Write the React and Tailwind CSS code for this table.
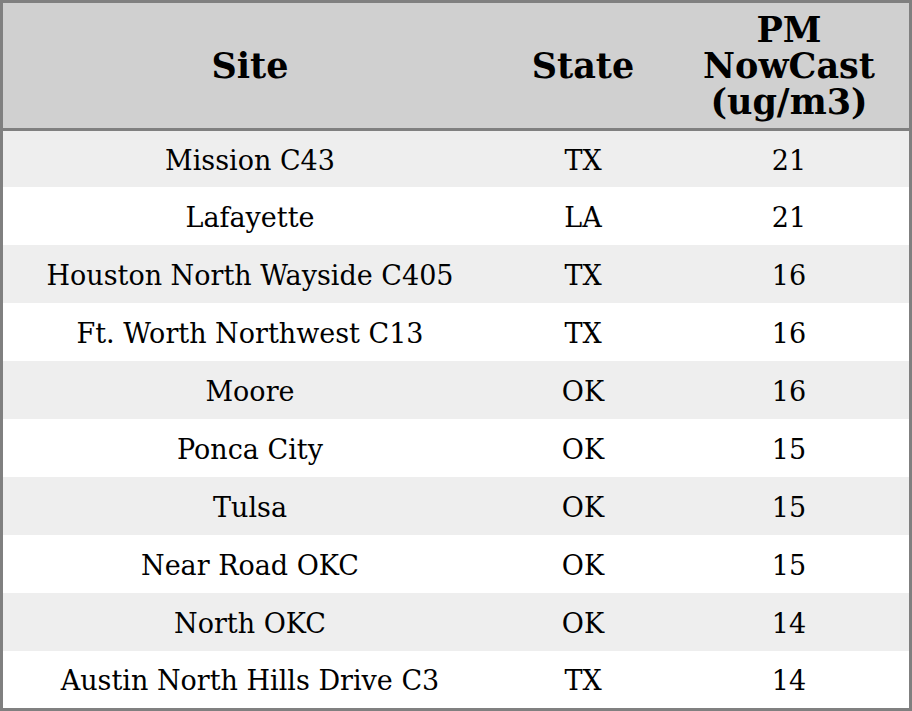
const rows = [
  ['Mission C43', 'TX', '21'],
  ['Lafayette', 'LA', '21'],
  ['Houston North Wayside C405', 'TX', '16'],
  ['Ft. Worth Northwest C13', 'TX', '16'],
  ['Moore', 'OK', '16'],
  ['Ponca City', 'OK', '15'],
  ['Tulsa', 'OK', '15'],
  ['Near Road OKC', 'OK', '15'],
  ['North OKC', 'OK', '14'],
  ['Austin North Hills Drive C3', 'TX', '14'],
]

function rowHeight(i) {
  if (i === 0) return 'h-[56px]'
  if (i === rows.length - 1) return 'h-[57px]'
  return 'h-[58px]'
}

export default function App() {
  return (
    <div className="w-[912px] h-[711px] border-[3px] border-[#808080] bg-white text-black font-['DejaVu_Serif',serif] flex flex-col overflow-hidden">
      {/* Header */}
      <div className="h-[125px] bg-[#d0d0d0] flex items-center font-bold text-[35px] leading-[36px] text-center">
        <div className="w-[494px]">Site</div>
        <div className="w-[172px]">State</div>
        <div className="flex-1">
          PM
          <br />
          NowCast
          <br />
          (ug/m3)
        </div>
      </div>
      <div className="h-[3px] bg-[#808080]" />

      {/* Rows */}
      {rows.map((r, i) => (
        <div
          key={r[0]}
          className={`${rowHeight(i)} ${i % 2 === 0 ? 'bg-[#eeeeee]' : 'bg-white'} flex items-center pt-[4px] text-[27px] text-center`}
        >
          <div className="w-[494px]">{r[0]}</div>
          <div className="w-[172px]">{r[1]}</div>
          <div className="flex-1">{r[2]}</div>
        </div>
      ))}
    </div>
  )
}
